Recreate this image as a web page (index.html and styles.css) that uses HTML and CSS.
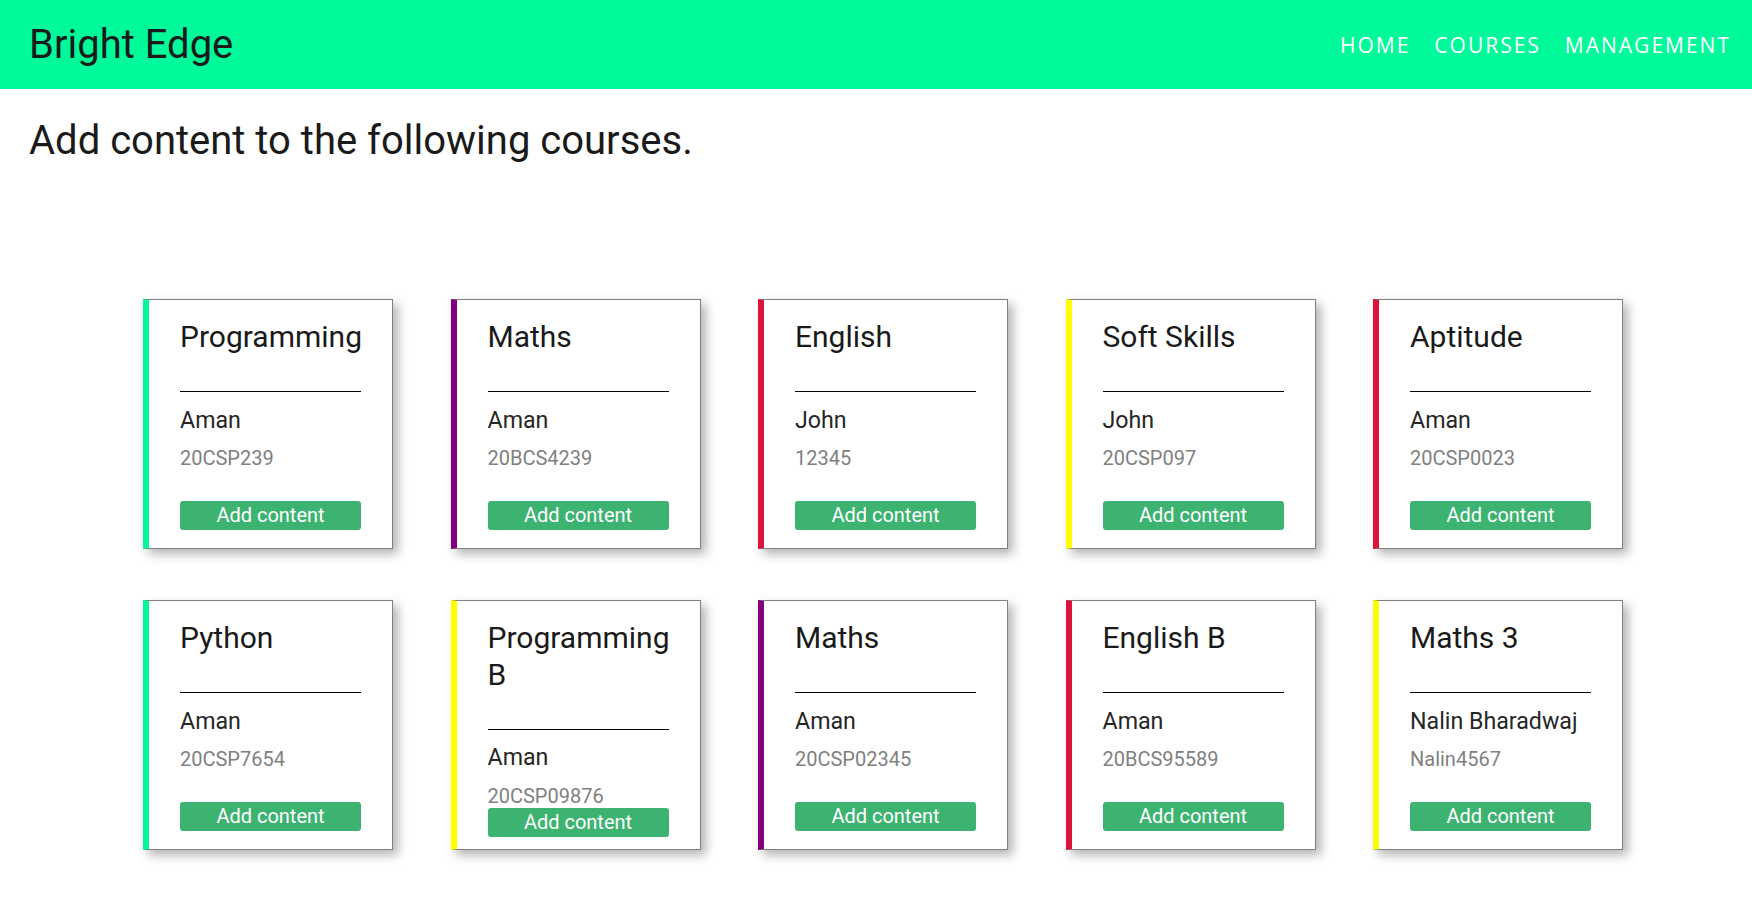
FILE: index.html
```html
<!DOCTYPE html>
<html lang="en">
<head>
<meta charset="utf-8">
<title>Bright Edge</title>
<link rel="stylesheet" href="styles.css">
</head>
<body>
<header class="topbar">
  <div class="brand">Bright Edge</div>
  <nav class="nav">
    <a href="#" class="nav-link">HOME</a>
    <a href="#" class="nav-link">COURSES</a>
    <a href="#" class="nav-link">MANAGEMENT</a>
  </nav>
</header>
<main>
  <h1 class="page-title">Add content to the following courses.</h1>
  <section class="course-grid">
    <div class="card c-green"><h2 class="card-title">Programming</h2><hr class="divider"><div class="teacher">Aman</div><div class="code">20CSP239</div><button class="add-btn">Add content</button></div>
    <div class="card c-purple"><h2 class="card-title">Maths</h2><hr class="divider"><div class="teacher">Aman</div><div class="code">20BCS4239</div><button class="add-btn">Add content</button></div>
    <div class="card c-red"><h2 class="card-title">English</h2><hr class="divider"><div class="teacher">John</div><div class="code">12345</div><button class="add-btn">Add content</button></div>
    <div class="card c-yellow"><h2 class="card-title">Soft Skills</h2><hr class="divider"><div class="teacher">John</div><div class="code">20CSP097</div><button class="add-btn">Add content</button></div>
    <div class="card c-red"><h2 class="card-title">Aptitude</h2><hr class="divider"><div class="teacher">Aman</div><div class="code">20CSP0023</div><button class="add-btn">Add content</button></div>
    <div class="card c-green"><h2 class="card-title">Python</h2><hr class="divider"><div class="teacher">Aman</div><div class="code">20CSP7654</div><button class="add-btn">Add content</button></div>
    <div class="card c-yellow"><h2 class="card-title">Programming B</h2><hr class="divider"><div class="teacher">Aman</div><div class="code">20CSP09876</div><button class="add-btn">Add content</button></div>
    <div class="card c-purple"><h2 class="card-title">Maths</h2><hr class="divider"><div class="teacher">Aman</div><div class="code">20CSP02345</div><button class="add-btn">Add content</button></div>
    <div class="card c-red"><h2 class="card-title">English B</h2><hr class="divider"><div class="teacher">Aman</div><div class="code">20BCS95589</div><button class="add-btn">Add content</button></div>
    <div class="card c-yellow"><h2 class="card-title">Maths 3</h2><hr class="divider"><div class="teacher">Nalin Bharadwaj</div><div class="code">Nalin4567</div><button class="add-btn">Add content</button></div>
  </section>
</main>
</body>
</html>
```
FILE: styles.css
```css
* { box-sizing: border-box; }

body {
  margin: 0;
  font-family: Roboto, "Liberation Sans", sans-serif;
  background: #ffffff;
  color: #222;
}

.topbar {
  height: 89px;
  background: #00fa9a;
  display: flex;
  align-items: center;
  justify-content: space-between;
  padding: 0 21px 0 29px;
}

.brand {
  font-size: 40px;
  color: #1a1a1a;
  line-height: normal;
}

.nav {
  display: flex;
  gap: 24px;
}

.nav-link {
  font-family: "Open Sans", "Liberation Sans", sans-serif;
  font-size: 21px;
  letter-spacing: 2px;
  color: #ffffff;
  text-decoration: none;
}

.page-title {
  margin: 28px 0 0 29px;
  font-size: 40px;
  font-weight: 400;
  line-height: normal;
  color: #1a1a1a;
}

.course-grid {
  display: grid;
  grid-template-columns: repeat(5, 250px);
  column-gap: 57.5px;
  row-gap: 51px;
  margin: 135px 0 40px 143px;
}

.card {
  height: 250px;
  display: flex;
  flex-direction: column;
  border: 1px solid #808080;
  border-left: 6px solid #00fa9a;
  padding: 19px 31px 18px 31px;
  background: #fff;
  box-shadow: 5px 5px 10px rgba(0, 0, 0, 0.3);
}

.c-green { border-left-color: #00fa9a; }
.c-purple { border-left-color: #800080; }
.c-red { border-left-color: #dc143c; }
.c-yellow { border-left-color: #ffff00; }

.card-title {
  margin: 0;
  font-size: 30px;
  font-weight: 400;
  line-height: 36.7px;
  color: #1a1a1a;
}

.divider {
  margin: 35.5px 0 0 0;
  border: 0;
  border-top: 1px solid #000;
  height: 0;
  flex-shrink: 0;
}

.teacher {
  margin-top: 13.4px;
  font-size: 23.2px;
  font-weight: 400;
  line-height: normal;
  color: #262626;
}

.code {
  margin-top: 12.8px;
  font-size: 20px;
  line-height: normal;
  color: #808080;
}

.add-btn {
  margin-top: auto;
  flex-shrink: 0;
  width: 100%;
  height: 29px;
  padding: 0;
  border: 0;
  border-radius: 3px;
  background: #3cb371;
  color: #fff;
  font-family: Roboto, "Liberation Sans", sans-serif;
  font-size: 20px;
  line-height: 29px;
}
```
